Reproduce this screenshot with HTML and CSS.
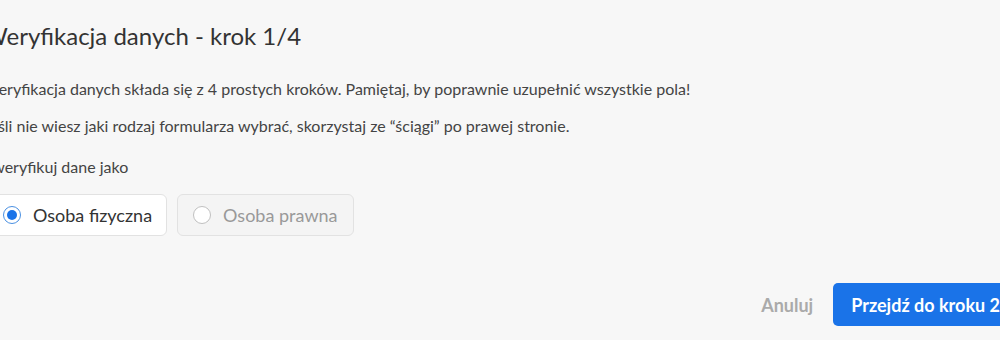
FILE: index.html
```html
<!DOCTYPE html>
<html lang="pl">
<head>
<meta charset="utf-8">
<link rel="stylesheet" href="styles.css">
</head>
<body>
<div class="panel">
  <h1 class="title">Weryfikacja danych - krok 1/4</h1>
  <p class="text">Weryfikacja danych składa się z 4 prostych kroków. Pamiętaj, by poprawnie uzupełnić wszystkie pola!</p>
  <p class="text">Jeśli nie wiesz jaki rodzaj formularza wybrać, skorzystaj ze “ściągi” po prawej stronie.</p>
  <p class="label">Zweryfikuj dane jako</p>
  <div class="options">
    <label class="option selected"><span class="radio"><span class="dot"></span></span>Osoba fizyczna</label>
    <label class="option disabled"><span class="radio"></span>Osoba prawna</label>
  </div>
  <div class="actions">
    <button class="btn-cancel">Anuluj</button>
    <button class="btn-primary">Przejdź do kroku 2</button>
  </div>
</div>
</body>
</html>
```
FILE: styles.css
```css
html, body {
  margin: 0;
  padding: 0;
  background: #f7f7f7;
}
body {
  font-family: Lato, "Noto Sans", sans-serif;
  color: #333;
  overflow: hidden;
}
.panel {
  margin: 0 -18px 0 -17px;
  padding-top: 21px;
}
.title {
  margin: 0;
  font-size: 24px;
  font-weight: 400;
  line-height: 30px;
  color: #333;
}
.text {
  margin: 0;
  font-size: 16px;
  line-height: 22px;
  color: #444;
}
.title + .text {
  margin-top: 27px;
}
.text + .text {
  margin-top: 15px;
}
.label {
  margin: 19px 0 0;
  font-size: 16px;
  line-height: 22px;
  color: #444;
}
.options {
  display: flex;
  gap: 10px;
  margin: 16px 0 0 4px;
}
.option {
  display: flex;
  align-items: center;
  gap: 12px;
  height: 42px;
  box-sizing: border-box;
  padding: 0 14px 0 15px;
  border: 1px solid #e2e2e2;
  border-radius: 6px;
  background: #fff;
  font-size: 18px;
  color: #333;
}
.option.disabled {
  background: #f4f4f4;
  color: #999;
  padding-right: 15px;
}
.radio {
  width: 18px;
  height: 18px;
  border: 1px solid #b5b5b5;
  border-radius: 50%;
  box-sizing: border-box;
  display: flex;
  align-items: center;
  justify-content: center;
  background: #fff;
  flex: none;
}
.selected .radio {
  border: 1.5px solid #4a90e2;
}
.dot {
  width: 10px;
  height: 10px;
  border-radius: 50%;
  background: #1a73e8;
}
.disabled .radio {
  border-color: #c0c0c0;
}
.actions {
  display: flex;
  justify-content: flex-end;
  align-items: center;
  gap: 20px;
  margin-top: 47px;
}
.btn-cancel {
  border: 0;
  background: transparent;
  font: 700 18px Lato, "Noto Sans", sans-serif;
  color: #aaa;
  padding: 0;
}
.btn-primary {
  border: 0;
  border-radius: 5px;
  background: #1a73e8;
  color: #fff;
  font: 700 18px Lato, "Noto Sans", sans-serif;
  height: 43px;
  padding: 0 18px;
}
```
